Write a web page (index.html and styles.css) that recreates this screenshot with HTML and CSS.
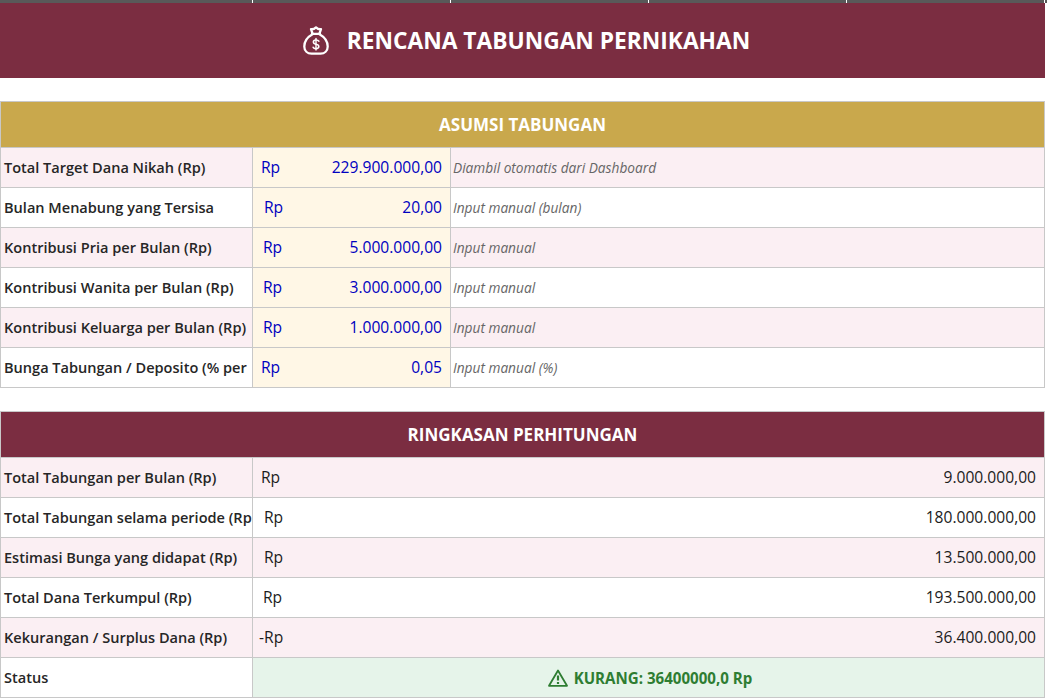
FILE: index.html
```html
<!DOCTYPE html>
<html lang="en">
<head>
<meta charset="UTF-8">
<meta name="viewport" content="width=device-width, initial-scale=1.0">
<title>Rencana Tabungan Pernikahan</title>
<link rel="stylesheet" href="styles.css">
</head>
<body>

<div class="topStrip">
    <span></span><span></span><span></span><span></span><span></span>
</div>

<div class="banner">
    <svg class="bagIcon" viewBox="0 0 26 29" width="26" height="29" fill="none" stroke="#fff" stroke-width="2.3" stroke-linecap="round" stroke-linejoin="round">
        <path d="M9.5 7.5 L8 3.2 Q10.8 3.6 13 1.4 Q15.2 3.6 18 3.2 L16.5 7.5"/>
        <path d="M9 7.8 H17"/>
        <path d="M9.5 8.2 C4.5 11 1.3 15.5 1.3 20.5 C1.3 25 4.5 27.7 8.5 27.7 H17.5 C21.5 27.7 24.7 25 24.7 20.5 C24.7 15.5 21.5 11 16.5 8.2"/>
        <path d="M15.8 15.2 Q15.2 14 13 14 Q10.4 14 10.4 16 Q10.4 17.8 13 18.2 Q15.8 18.6 15.8 20.6 Q15.8 22.6 13 22.6 Q10.8 22.6 10.2 21.3" stroke-width="1.6"/>
        <path d="M13 12.4 V24" stroke-width="1.4"/>
    </svg>
    <h1>RENCANA TABUNGAN PERNIKAHAN</h1>
</div>

<section class="block">
    <h2 class="blockTitle gold">ASUMSI TABUNGAN</h2>
    <div class="row pink">
        <div class="label">Total Target Dana Nikah (Rp)</div>
        <div class="money input"><span class="cur cur1">Rp</span><span>229.900.000,00</span></div>
        <div class="note">Diambil otomatis dari Dashboard</div>
    </div>
    <div class="row">
        <div class="label">Bulan Menabung yang Tersisa</div>
        <div class="money input"><span class="cur">Rp</span><span>20,00</span></div>
        <div class="note">Input manual (bulan)</div>
    </div>
    <div class="row pink">
        <div class="label">Kontribusi Pria per Bulan (Rp)</div>
        <div class="money input"><span class="cur cur2">Rp</span><span>5.000.000,00</span></div>
        <div class="note">Input manual</div>
    </div>
    <div class="row">
        <div class="label">Kontribusi Wanita per Bulan (Rp)</div>
        <div class="money input"><span class="cur cur2">Rp</span><span>3.000.000,00</span></div>
        <div class="note">Input manual</div>
    </div>
    <div class="row pink">
        <div class="label">Kontribusi Keluarga per Bulan (Rp)</div>
        <div class="money input"><span class="cur cur2">Rp</span><span>1.000.000,00</span></div>
        <div class="note">Input manual</div>
    </div>
    <div class="row">
        <div class="label">Bunga Tabungan / Deposito (% per</div>
        <div class="money input"><span class="cur cur1">Rp</span><span>0,05</span></div>
        <div class="note">Input manual (%)</div>
    </div>
</section>

<section class="block">
    <h2 class="blockTitle wine">RINGKASAN PERHITUNGAN</h2>
    <div class="row wide pink">
        <div class="label">Total Tabungan per Bulan (Rp)</div>
        <div class="money"><span class="cur cur1">Rp</span><span>9.000.000,00</span></div>
    </div>
    <div class="row wide">
        <div class="label">Total Tabungan selama periode (Rp</div>
        <div class="money"><span class="cur">Rp</span><span>180.000.000,00</span></div>
    </div>
    <div class="row wide pink">
        <div class="label">Estimasi Bunga yang didapat (Rp)</div>
        <div class="money"><span class="cur">Rp</span><span>13.500.000,00</span></div>
    </div>
    <div class="row wide">
        <div class="label">Total Dana Terkumpul (Rp)</div>
        <div class="money"><span class="cur cur2">Rp</span><span>193.500.000,00</span></div>
    </div>
    <div class="row wide pink">
        <div class="label">Kekurangan / Surplus Dana (Rp)</div>
        <div class="money"><span class="cur cur3">-Rp</span><span>36.400.000,00</span></div>
    </div>
    <div class="row wide">
        <div class="label">Status</div>
        <div class="status">
            <svg viewBox="0 0 20 18" width="20" height="18" fill="none" stroke="#2e7d32" stroke-width="1.8" stroke-linejoin="round">
                <path d="M10 1.5 L19 16.8 H1 Z"/>
                <path d="M10 6.5 V11.5" stroke-width="2.2"/>
                <path d="M10 13 V15" stroke-width="2.2"/>
            </svg>
            <span>KURANG: 36400000,0 Rp</span>
        </div>
    </div>
</section>

</body>
</html>
```

FILE: styles.css
```css
/* Overall Style */
html, body {
    height: 699px;
    overflow: hidden;
}
body {
    margin: 0;
    width: 1047px;
    font-family: "Open Sans", "Noto Sans", Arial, sans-serif;
    font-size: 15.6px;
    color: #1c1c1c;
    background: #fff;
}

/* Top strip, bottom edge of the sheet row above */
.topStrip {
    display: grid;
    grid-template-columns: 253px 198px 198px 198px 198px 2px;
    height: 3px;
    background: #595959;
}
.topStrip span {
    border-right: 1px solid #fff;
}

/* Banner */
.banner {
    display: flex;
    align-items: center;
    justify-content: center;
    gap: 18px;
    width: 1045px;
    height: 75px;
    box-sizing: border-box;
    padding: 0 0 0 8px;
    background: #7b2d41;
    color: #fff;
}
.banner h1 {
    margin: 0;
    font-size: 22.75px;
    font-weight: 700;
}
.bagIcon {
    flex: none;
}

/* Blocks */
.block {
    width: 1045px;
    margin-top: 23px;
    box-sizing: border-box;
    border-left: 1px solid #c8c8c8;
    border-right: 1px solid #c8c8c8;
}
.blockTitle {
    height: 47px;
    margin: 0;
    display: flex;
    align-items: center;
    justify-content: center;
    box-sizing: border-box;
    border-top: 1px solid #c8c8c8;
    border-bottom: 1px solid #c8c8c8;
    font-size: 17px;
    font-weight: 700;
    color: #fff;
}
.gold {
    background: #c9a84c;
}
.wine {
    background: #7b2d41;
}

/* Rows */
.row {
    display: grid;
    grid-template-columns: 251px 199px 1fr;
    height: 40px;
    box-sizing: border-box;
    border-bottom: 1px solid #c8c8c8;
    background: #fff;
}
.row.wide {
    grid-template-columns: 251px 1fr;
}
.pink {
    background: #fbeff3;
}
.row > div {
    display: flex;
    align-items: center;
    box-sizing: border-box;
}
.label {
    padding: 0 0 2px 3px;
    font-size: 14.55px;
    font-weight: 600;
    color: #262626;
    white-space: nowrap;
    overflow: hidden;
}
.money {
    justify-content: space-between;
    padding: 0 8px 1px 11px;
    border-left: 1px solid #c8c8c8;
}
.money.input {
    background: #fff7e6;
    color: #0000c0;
    border-right: 1px solid #c8c8c8;
}
.cur1 {
    margin-left: -3px;
}
.cur2 {
    margin-left: -1px;
}
.cur3 {
    margin-left: -5px;
}
.note {
    padding: 0 0 1px 2px;
    font-size: 13.7px;
    font-style: italic;
    color: #666;
}
.status {
    justify-content: center;
    gap: 6px;
    padding-left: 3px;
    border-left: 1px solid #c8c8c8;
    background: #e6f4ea;
    color: #2e7d32;
    font-size: 15.1px;
    font-weight: 700;
}
```
